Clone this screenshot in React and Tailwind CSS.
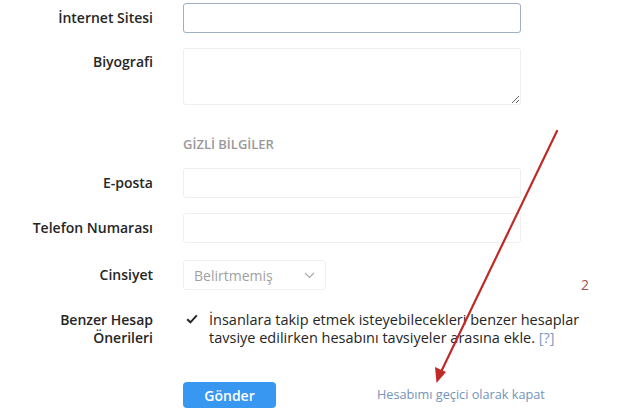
import React from "react";

const font = { fontFamily: '"Open Sans", "Noto Sans", sans-serif' };

function Row({ label, children, className = "", labelClass = "pt-[6px]" }) {
  return (
    <div className={`flex items-start ${className}`}>
      <label
        className={`w-[153px] shrink-0 text-right text-[14px] leading-[18px] font-[550] text-[#262626] ${labelClass}`}
      >
        {label}
      </label>
      <div className="ml-[30px] flex-1">{children}</div>
    </div>
  );
}

export default function App() {
  return (
    <div
      className="relative w-[635px] h-[416px] overflow-hidden bg-white text-[#262626]"
      style={font}
    >
      <div className="flex flex-col">
        <Row label="İnternet Sitesi" className="mt-[3px]">
          <input
            type="text"
            className="block w-[338px] h-[30px] rounded-[3px] border-[1.5px] border-[#9fb0c5] bg-white px-2 outline-none"
          />
        </Row>

        <Row label="Biyografi" className="mt-[15px]" labelClass="pt-[5px]">
          <textarea className="block w-[338px] h-[57px] rounded-[3px] border border-[#efefef] bg-white px-2 outline-none" />
        </Row>

        <div className="ml-[183px] mt-[30px] text-[13px] leading-[18px] font-semibold text-[#999999]">
          GİZLİ BİLGİLER
        </div>

        <Row label="E-posta" className="mt-[15px]">
          <input
            type="text"
            className="block w-[338px] h-[30px] rounded-[3px] border border-[#efefef] bg-white px-2 outline-none"
          />
        </Row>

        <Row label="Telefon Numarası" className="mt-[15px]">
          <input
            type="text"
            className="block w-[338px] h-[30px] rounded-[3px] border border-[#efefef] bg-white px-2 outline-none"
          />
        </Row>

        <Row label="Cinsiyet" className="mt-[17px]">
          <div className="flex items-center justify-between w-[143px] h-[30px] rounded-[3px] border border-[#efefef] pl-[10px] pr-[10px]">
            <span className="text-[14px] text-[#a0a0a0]">Belirtmemiş</span>
            <svg width="11" height="7" viewBox="0 0 11 7" fill="none">
              <path d="M1 1l4.5 4.5L10 1" stroke="#a8a8a8" strokeWidth="1.1" />
            </svg>
          </div>
        </Row>

        <Row
          label={
            <>
              Benzer Hesap
              <br />
              Önerileri
            </>
          }
          className="mt-[21px]"
          labelClass=""
        >
          <div className="flex items-start">
            <svg className="mt-[3px] ml-[3px] shrink-0" width="12" height="10" viewBox="0 0 12 10" fill="none">
              <path d="M1.2 5.2L4.4 8.3L10.8 1.3" stroke="#262626" strokeWidth="2" />
            </svg>
            <p className="ml-[11px] text-[14.5px] leading-[18px] text-[#262626] whitespace-nowrap">
              İnsanlara takip etmek isteyebilecekleri benzer hesaplar
              <br />
              tavsiye edilirken hesabını tavsiyeler arasına ekle.{" "}
              <span className="text-[#7d9cc0]">[?]</span>
            </p>
          </div>
        </Row>

        <div className="ml-[183px] mt-[35px] flex items-center">
          <button className="w-[93px] h-[26px] rounded-[4px] bg-[#3897f0] text-white text-[14px] font-semibold">
            Gönder
          </button>
          <a className="ml-[101px] text-[12.7px] text-[#7294ba]" href="#">
            Hesabımı geçici olarak kapat
          </a>
        </div>
      </div>

      <span className="absolute left-[581px] top-[274px] text-[14px] text-[#a35454]">2</span>

      <svg className="absolute left-0 top-0 pointer-events-none" width="635" height="416">
        <line x1="557" y1="131" x2="440" y2="374" stroke="#bf2a26" strokeWidth="2.2" strokeLinecap="round" />
        <path d="M436.5 383 L435 367 L446 372 Z" fill="#bf2a26" />
      </svg>
    </div>
  );
}
